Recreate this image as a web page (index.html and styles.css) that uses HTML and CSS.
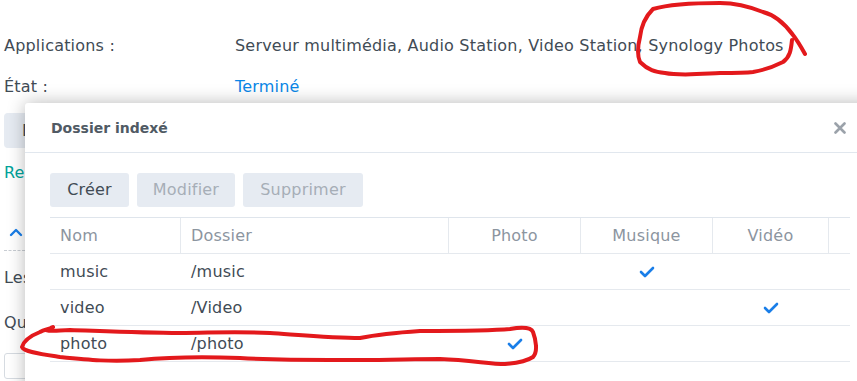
FILE: index.html
```html
<!DOCTYPE html>
<html lang="fr">
<head>
    <meta charset="UTF-8">
    <title>Dossier indexé</title>
    <link rel="stylesheet" href="styles.css">
</head>
<body>

    <!-- Page behind the dialog -->
    <div class="page">
        <div class="info-row">
            <span class="info-label">Applications :</span>
            <span class="info-value">Serveur multimédia, Audio Station, Video Station, Synology Photos</span>
        </div>
        <div class="info-row">
            <span class="info-label">État :</span>
            <span class="info-value status">Terminé</span>
        </div>

        <!-- only the strip left of the dialog is visible -->
        <div class="page-side">
            <div class="page-actions">
                <span class="page-button">D</span>
            </div>
            <a class="page-link" href="#">Re</a>
            <div class="section-toggle">
                <svg width="14" height="10" viewBox="0 0 14 10">
                    <polyline points="2,8 7,3 12,8" fill="none" stroke="#1a7ee8" stroke-width="2.4" stroke-linecap="round" stroke-linejoin="round"/>
                </svg>
            </div>
            <p class="page-text first">Les</p>
            <p class="page-text">Qu</p>
            <div class="page-input"></div>
        </div>
    </div>

    <!-- Dialog -->
    <div class="dialog">
        <div class="dialog-header">
            <span class="dialog-title">Dossier indexé</span>
            <svg class="dialog-close" width="12" height="12" viewBox="0 0 12 12">
                <path d="M1.5 1.5 L10.5 10.5 M10.5 1.5 L1.5 10.5" stroke="#9ba2aa" stroke-width="2.6" stroke-linecap="round"/>
            </svg>
        </div>
        <div class="dialog-body">
            <div class="toolbar">
                <span class="tool-button btn-create">Créer</span>
                <span class="tool-button btn-edit disabled">Modifier</span>
                <span class="tool-button btn-delete disabled">Supprimer</span>
            </div>

            <div class="grid">
                <div class="grid-head">
                    <div class="cell col-name">Nom</div>
                    <div class="cell col-folder">Dossier</div>
                    <div class="cell col-photo center">Photo</div>
                    <div class="cell col-music center">Musique</div>
                    <div class="cell col-video center">Vidéo</div>
                    <div class="cell col-rest"></div>
                </div>
                <div id="grid-rows"></div>
            </div>
        </div>
    </div>

    <!-- Hand-drawn red marks -->
    <svg class="marks" width="857" height="381" viewBox="0 0 857 381">
        <path d="M805 54 C800 45 797 40 793 35 C785 24 775 15 763 12 C748 6 735 3 720 3 C700 3 670 4 653 9 C645 17 641 28 640 37 C638 45 637 55 640 62 C648 70 655 72 665 73 C680 76 700 74 720 73 C735 73 745 73 753 72 C765 70 775 66 783 62 C790 57 791 50 792 40"
              fill="none" stroke="#e3191c" stroke-width="4" stroke-linecap="round" stroke-linejoin="round"/>
        <path d="M53 327 C48 330 45 329 40 332 C30 336 24 340 22 347 C24 352 40 354 60 357 C90 360 110 362 140 360 C180 356 215 357 240 358 C300 361 330 360 360 360 C390 360 415 359 440 359 C470 360 490 364 505 364 C518 363 527 361 533 357 C538 352 536 340 533 332 C531 327 522 327 510 329 C490 331 460 331 420 331 C390 333 375 335 360 338 C335 338 300 335 270 333 C230 331 210 333 180 333 C140 333 100 331 70 330 C60 330 52 332 46 330"
              fill="none" stroke="#e3191c" stroke-width="4" stroke-linecap="round" stroke-linejoin="round"/>
    </svg>

    <script>
        const folders = [
            { name: 'music', path: '/music', photo: false, music: true, video: false },
            { name: 'video', path: '/Video', photo: false, music: false, video: true },
            { name: 'photo', path: '/photo', photo: true, music: false, video: false }
        ];

        const check = '<svg width="16" height="12" viewBox="0 0 16 12"><polyline points="2,6 6,10 14,2" fill="none" stroke="#1a7ee8" stroke-width="2.6" stroke-linecap="round" stroke-linejoin="round"/></svg>';

        function renderRows(list) {
            const rowsDiv = document.getElementById('grid-rows');
            rowsDiv.innerHTML = '';

            list.forEach(folder => {
                const row = document.createElement('div');
                row.classList.add('grid-row');
                row.innerHTML = `
                    <div class="cell col-name">${folder.name}</div>
                    <div class="cell col-folder">${folder.path}</div>
                    <div class="cell col-photo center">${folder.photo ? check : ''}</div>
                    <div class="cell col-music center">${folder.music ? check : ''}</div>
                    <div class="cell col-video center">${folder.video ? check : ''}</div>
                    <div class="cell col-rest"></div>
                `;
                rowsDiv.appendChild(row);
            });
        }

        renderRows(folders);
    </script>
</body>
</html>
```

FILE: styles.css
```css
body {
    font-family: "DejaVu Sans", Verdana, sans-serif;
    font-size: 16px;
    letter-spacing: 0.2px;
    color: #414b55;
    margin: 0;
    background-color: #fff;
    width: 857px;
    height: 381px;
    overflow: hidden;
    position: relative;
}

/* Page behind the dialog */
.page {
    padding: 25px 0 0 4px;
}

.info-row {
    display: flex;
    height: 41px;
    align-items: center;
}

.info-label {
    width: 231px;
}

.status {
    color: #0a86e6;
}

.page-side {
    width: 21px;
    overflow: hidden;
    white-space: nowrap;
}

.page-actions {
    margin-top: 6px;
    height: 35px;
}

.page-button {
    display: inline-block;
    width: 40px;
    height: 35px;
    line-height: 35px;
    padding-left: 18px;
    background-color: #e6ebf2;
    border-radius: 4px;
}

.page-link {
    display: block;
    margin-top: 15px;
    color: #00a39a;
    text-decoration: none;
}

.section-toggle {
    display: flex;
    align-items: center;
    margin-top: 39px;
    height: 22px;
    padding: 0 0 7px 5px;
    border-bottom: 1px dashed #c8cdd3;
}

.page-text {
    margin: 26px 0 0;
}

.page-text.first {
    margin-top: 17px;
}

.page-input {
    margin-top: 21px;
    width: 60px;
    height: 24px;
    border: 1px solid #d6dbe1;
    border-radius: 3px;
}

/* Dialog */
.dialog {
    position: absolute;
    left: 25px;
    top: 103px;
    width: 860px;
    height: 300px;
    background-color: #fff;
    border-radius: 3px;
    box-shadow: 0 0 18px rgba(0, 0, 0, 0.28);
}

.dialog-header {
    display: flex;
    align-items: center;
    justify-content: space-between;
    height: 49px;
    padding: 0 24px 0 26px;
    border-bottom: 1px solid #e1e7ee;
}

.dialog-title {
    font-size: 14px;
    letter-spacing: 0;
    font-weight: bold;
    color: #505a64;
}

.dialog-close {
    margin-right: 15px;
}

.dialog-body {
    padding: 20px 0 0 25px;
}

.toolbar {
    display: flex;
    gap: 8px;
}

.tool-button {
    height: 34px;
    line-height: 34px;
    text-align: center;
    background-color: #e6ebf2;
    border-radius: 3px;
}

.btn-create {
    width: 79px;
}

.btn-edit {
    width: 98px;
}

.btn-delete {
    width: 120px;
}

.disabled {
    color: #a6aeb7;
}

/* Grid */
.grid {
    margin-top: 10px;
    width: 800px;
    border-top: 1px solid #dfe5ec;
}

.grid-head,
.grid-row {
    display: flex;
    height: 35px;
    border-bottom: 1px solid #e5e9ee;
}

.grid-head .cell {
    color: #8c959f;
    border-right: 1px solid #e5e9ee;
}

.grid-head .col-rest {
    border-right: none;
}

.cell {
    display: flex;
    align-items: center;
    padding-left: 10px;
    box-sizing: border-box;
}

.center {
    justify-content: center;
    padding-left: 0;
}

.col-name {
    width: 131px;
}

.col-folder {
    width: 268px;
}

.col-photo {
    width: 132px;
}

.col-music {
    width: 132px;
}

.col-video {
    width: 116px;
}

.col-rest {
    flex: 1;
}

/* Red marks */
.marks {
    position: absolute;
    left: 0;
    top: 0;
    pointer-events: none;
}
```
